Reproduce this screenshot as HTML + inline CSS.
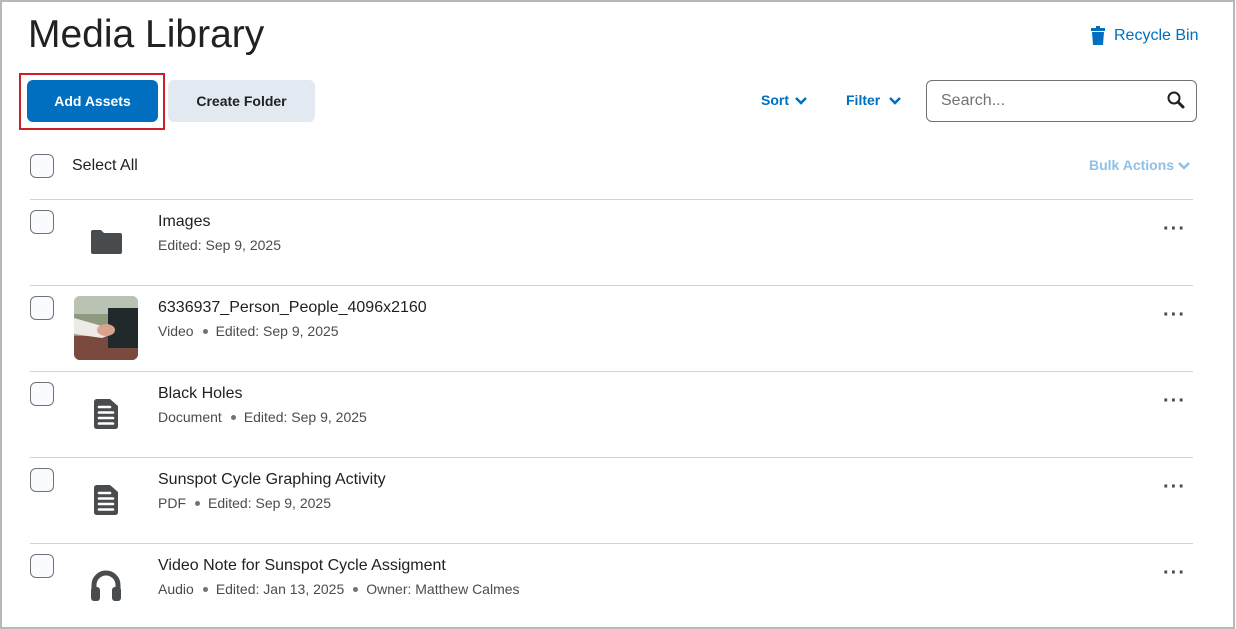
<!DOCTYPE html>
<html><head><meta charset="utf-8"><style>
*{box-sizing:border-box;margin:0;padding:0}
body{width:1236px;height:629px;background:#fff;font-family:"Liberation Sans",sans-serif;color:#202122;position:relative;overflow:hidden}
.frame{position:absolute;left:0;top:0;width:1235px;height:629px;border:2px solid #b8b8b8}
.abs{position:absolute}
h1{position:absolute;left:28px;top:13px;font-size:39px;font-weight:400;color:#202122}
.cb{position:absolute;width:24px;height:24px;border:1px solid #6e7376;border-radius:6px;background:#f9fbff}
.btn{position:absolute;top:80px;height:42px;border-radius:6px;font-size:14px;font-weight:700;display:flex;align-items:center;justify-content:center}
.div{position:absolute;left:30px;width:1163px;height:1px;background:#cdd5dc}
.t{position:absolute;left:158px;font-size:16px;color:#202122}
.m{position:absolute;left:158px;font-size:14px;color:#494c4e}
.dot{display:inline-block;width:5px;height:5px;border-radius:50%;background:#6e7376;margin:0 8px 2px 9px;vertical-align:middle}
.more{position:absolute;left:1163px;font-size:20px;font-weight:700;letter-spacing:1px;color:#494c4e}
.blue{color:#006fbf}
</style></head><body>
<div class="frame"></div>
<h1>Media Library</h1>
<svg class="abs" style="left:1091px;top:26px" width="14" height="19" viewBox="0 0 14 19"><rect x="0" y="2" width="14" height="3" fill="#006fbf"/><rect x="5" y="0" width="4" height="3" fill="#006fbf"/><path d="M1 6h12l-1 13H2z" fill="#006fbf"/></svg>
<div class="abs blue" style="left:1114px;top:27px;font-size:16px">Recycle Bin</div>
<div class="abs" style="left:19px;top:73px;width:146px;height:57px;border:2px solid #cd2026"></div>
<div class="btn" style="left:27px;width:131px;background:#006fbf;color:#fff">Add Assets</div>
<div class="btn" style="left:168px;width:147px;background:#e3e9f1;color:#202122">Create Folder</div>
<div class="abs blue" style="left:761px;top:92px;font-size:14px;font-weight:700">Sort</div>
<svg class="abs" style="left:794px;top:96px" width="14" height="9"><path d="M2 2l5 5 5-5" stroke="#006fbf" stroke-width="2.5" fill="none"/></svg>
<div class="abs blue" style="left:846px;top:92px;font-size:14px;font-weight:700">Filter</div>
<svg class="abs" style="left:888px;top:96px" width="14" height="9"><path d="M2 2l5 5 5-5" stroke="#006fbf" stroke-width="2.5" fill="none"/></svg>
<div class="abs" style="left:926px;top:80px;width:271px;height:42px;border:1px solid #6e7376;border-radius:6px"></div>
<div class="abs" style="left:941px;top:92px;font-size:16px;color:#6e7376">Search...</div>
<svg class="abs" style="left:1166px;top:90px" width="20" height="20"><circle cx="8" cy="8" r="5.5" stroke="#202122" stroke-width="2" fill="none"/><path d="M12 12l5 5" stroke="#202122" stroke-width="3" stroke-linecap="round"/></svg>
<div class="cb" style="left:30px;top:154px"></div>
<div class="abs" style="left:72px;top:157px;font-size:16px">Select All</div>
<div class="abs" style="left:1089px;top:157px;font-size:14px;font-weight:700;color:#8ec1e6">Bulk Actions</div>
<svg class="abs" style="left:1177px;top:161px" width="14" height="9"><path d="M2 2l5 5 5-5" stroke="#8ec1e6" stroke-width="2.5" fill="none"/></svg>

<div class="div" style="top:199px"></div>
<div class="cb" style="left:30px;top:210px"></div>
<svg class="abs" style="left:91px;top:230px" width="31" height="24"><path d="M0 2q0-2 2-2h8l3 3h16q2 0 2 2v17q0 2-2 2H2q-2 0-2-2z" fill="#494c4e"/></svg>
<div class="t" style="top:213px">Images</div>
<div class="m" style="top:237px">Edited: Sep 9, 2025</div>
<div class="more" style="top:218px">···</div>

<div class="div" style="top:285px"></div>
<div class="cb" style="left:30px;top:296px"></div>
<svg class="abs" style="left:74px;top:296px" width="64" height="64"><defs><clipPath id="c"><rect width="64" height="64" rx="6"/></clipPath></defs><g clip-path="url(#c)"><rect width="64" height="64" fill="#8d9a80"/><rect width="64" height="18" fill="#b9c2b3"/><rect y="40" width="64" height="24" fill="#7a4a3e"/><rect x="34" y="12" width="30" height="40" fill="#202a2a"/><path d="M0 22l28 8 10 8-10 4L0 38z" fill="#eeeae6"/><ellipse cx="32" cy="34" rx="9" ry="6" fill="#d9a48e"/></g></svg>
<div class="t" style="top:299px">6336937_Person_People_4096x2160</div>
<div class="m" style="top:323px">Video<span class="dot"></span>Edited: Sep 9, 2025</div>
<div class="more" style="top:304px">···</div>

<div class="div" style="top:371px"></div>
<div class="cb" style="left:30px;top:382px"></div>
<svg class="abs" style="left:94px;top:399px" width="24" height="30"><path d="M3 0h13l8 7v20q0 3-3 3H3q-3 0-3-3V3q0-3 3-3z" fill="#494c4e"/><g stroke="#fff" stroke-width="2.6" stroke-linecap="round"><path d="M5 8h11M5 13.5h14M5 19h14M5 24.5h14"/></g></svg>
<div class="t" style="top:385px">Black Holes</div>
<div class="m" style="top:409px">Document<span class="dot"></span>Edited: Sep 9, 2025</div>
<div class="more" style="top:390px">···</div>

<div class="div" style="top:457px"></div>
<div class="cb" style="left:30px;top:468px"></div>
<svg class="abs" style="left:94px;top:485px" width="24" height="30"><path d="M3 0h13l8 7v20q0 3-3 3H3q-3 0-3-3V3q0-3 3-3z" fill="#494c4e"/><g stroke="#fff" stroke-width="2.6" stroke-linecap="round"><path d="M5 8h11M5 13.5h14M5 19h14M5 24.5h14"/></g></svg>
<div class="t" style="top:471px">Sunspot Cycle Graphing Activity</div>
<div class="m" style="top:495px">PDF<span class="dot"></span>Edited: Sep 9, 2025</div>
<div class="more" style="top:476px">···</div>

<div class="div" style="top:543px"></div>
<div class="cb" style="left:30px;top:554px"></div>
<svg class="abs" style="left:90px;top:570px" width="32" height="32"><path d="M4 20v-5a12 12 0 0 1 24 0v5" stroke="#494c4e" stroke-width="5" fill="none"/><rect x="1" y="17" width="9" height="14" rx="3" fill="#494c4e"/><rect x="22" y="17" width="9" height="14" rx="3" fill="#494c4e"/></svg>
<div class="t" style="top:557px">Video Note for Sunspot Cycle Assigment</div>
<div class="m" style="top:581px">Audio<span class="dot"></span>Edited: Jan 13, 2025<span class="dot"></span>Owner: Matthew Calmes</div>
<div class="more" style="top:562px">···</div>
</body></html>
